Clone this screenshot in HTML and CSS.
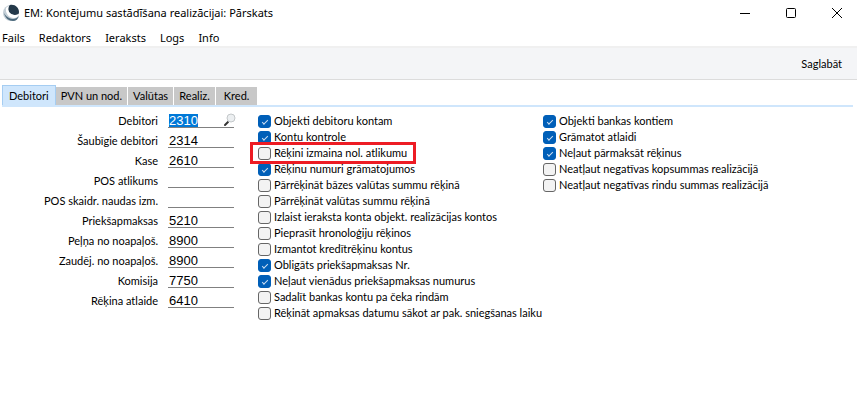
FILE: index.html
```html
<!DOCTYPE html>
<html lang="lv">
<head>
    <meta charset="UTF-8">
    <meta name="viewport" content="width=device-width, initial-scale=1.0">
    <title>EM: Kontējumu sastādīšana realizācijai: Pārskats</title>
    <link rel="stylesheet" href="styles.css">
</head>
<body>

    <!-- Title bar -->
    <header class="titlebar">
        <svg class="app-icon" viewBox="0 0 18 18" aria-hidden="true">
            <circle cx="9" cy="9" r="8" fill="#c3ced6"/>
            <path d="M8 1c5-1 9 3 9 7 0 3-2 4-5 3-4-1-6-4-6-6 0-2 1-3 2-4z" fill="#24394a"/>
            <path d="M2 9c1 5 5 8 9 8 3 0 5-2 6-5-3 3-6 4-10 2-2-1-4-3-5-5z" fill="#4c697c"/>
            <path d="M4 4c-1 5 3 10 8 10 2 0 4-1 5-4 0-1-2 1-4 1-5 0-8-4-6-9-1 0-2 1-3 2z" fill="#ffffff"/>
        </svg>
        <h1 class="window-title">EM: Kontējumu sastādīšana realizācijai: Pārskats</h1>
        <div class="window-buttons">
            <button type="button" aria-label="Minimizēt"><svg viewBox="0 0 12 12"><path d="M1 6.500h10"/></svg></button>
            <button type="button" aria-label="Maksimizēt"><svg viewBox="0 0 12 12"><rect x="1.500" y="1.500" width="9" height="9" rx="1"/></svg></button>
            <button type="button" aria-label="Aizvērt"><svg viewBox="0 0 12 12"><path d="M1 1l10 10M11 1L1 11"/></svg></button>
        </div>
    </header>

    <nav class="menu">
        <a href="#">Fails</a>
        <a href="#">Redaktors</a>
        <a href="#">Ieraksts</a>
        <a href="#">Logs</a>
        <a href="#">Info</a>
    </nav>

    <div class="toolbar">
        <button type="button" class="save-btn">Saglabāt</button>
    </div>

    <div class="tabs">
        <button type="button" class="tab active">Debitori</button>
        <button type="button" class="tab">PVN un nod.</button>
        <button type="button" class="tab">Valūtas</button>
        <button type="button" class="tab">Realiz.</button>
        <button type="button" class="tab">Kred.</button>
    </div>

    <form class="panel">
        <!-- Accounts -->
        <div class="accounts">
            <div class="field">
                <label for="debitori">Debitori</label>
                <div class="lookup">
                    <input type="text" id="debitori" value="2310" autofocus>
                    <svg class="search-icon" viewBox="0 0 14 14" aria-hidden="true">
                        <path d="M2 12l3-3" stroke="#333" stroke-width="2" stroke-linecap="round"/>
                        <circle cx="8" cy="5" r="4" fill="#eceff1" stroke="#c4c8ca"/>
                    </svg>
                </div>
            </div>
            <div class="field"><label for="saubigie">Šaubīgie debitori</label><input type="text" id="saubigie" value="2314"></div>
            <div class="field"><label for="kase">Kase</label><input type="text" id="kase" value="2610"></div>
            <div class="field"><label for="pos-atlikums">POS atlikums</label><input type="text" id="pos-atlikums"></div>
            <div class="field"><label for="pos-skaidra">POS skaidr. naudas izm.</label><input type="text" id="pos-skaidra"></div>
            <div class="field"><label for="prieksapmaksas">Priekšapmaksas</label><input type="text" id="prieksapmaksas" value="5210"></div>
            <div class="field"><label for="pelna">Peļņa no noapaļoš.</label><input type="text" id="pelna" value="8900"></div>
            <div class="field"><label for="zaudejumi">Zaudēj. no noapaļoš.</label><input type="text" id="zaudejumi" value="8900"></div>
            <div class="field"><label for="komisija">Komisija</label><input type="text" id="komisija" value="7750"></div>
            <div class="field"><label for="atlaide">Rēķina atlaide</label><input type="text" id="atlaide" value="6410"></div>
        </div>

        <!-- Options -->
        <div class="options">
            <label class="option"><input type="checkbox" checked>Objekti debitoru kontam</label>
            <label class="option"><input type="checkbox" checked>Kontu kontrole</label>
            <label class="option marked"><input type="checkbox">Rēķini izmaina nol. atlikumu</label>
            <label class="option"><input type="checkbox" checked>Rēķinu numuri grāmatojumos</label>
            <label class="option"><input type="checkbox">Pārrēķināt bāzes valūtas summu rēķinā</label>
            <label class="option"><input type="checkbox">Pārrēķināt valūtas summu rēķinā</label>
            <label class="option"><input type="checkbox">Izlaist ieraksta konta objekt. realizācijas kontos</label>
            <label class="option"><input type="checkbox">Pieprasīt hronoloģiju rēķinos</label>
            <label class="option"><input type="checkbox">Izmantot kredītrēķinu kontus</label>
            <label class="option"><input type="checkbox" checked>Obligāts priekšapmaksas Nr.</label>
            <label class="option"><input type="checkbox" checked>Neļaut vienādus priekšapmaksas numurus</label>
            <label class="option"><input type="checkbox">Sadalīt bankas kontu pa čeka rindām</label>
            <label class="option"><input type="checkbox">Rēķināt apmaksas datumu sākot ar pak. sniegšanas laiku</label>
        </div>

        <div class="options">
            <label class="option"><input type="checkbox" checked>Objekti bankas kontiem</label>
            <label class="option"><input type="checkbox" checked>Grāmatot atlaidi</label>
            <label class="option"><input type="checkbox" checked>Neļaut pārmaksāt rēķinus</label>
            <label class="option"><input type="checkbox">Neatļaut negatīvas kopsummas realizācijā</label>
            <label class="option"><input type="checkbox">Neatļaut negatīvas rindu summas realizācijā</label>
        </div>
    </form>

    <script>
        // Select the first account when the window opens
        document.getElementById("debitori").select();
    </script>

</body>
</html>
```
FILE: styles.css
```css
* {
    box-sizing: border-box;
}

body {
    margin: 0;
    background-color: #fff;
    color: #000;
    font-family: Lato, sans-serif;
    font-size: 11px;
    line-height: 16px;
}

button {
    border: none;
    background: none;
    padding: 0;
    color: inherit;
    font: inherit;
}

/* Title bar */
.titlebar {
    display: flex;
    align-items: center;
    height: 26px;
    padding-left: 2px;
}

.app-icon {
    width: 18px;
    height: 18px;
}

.window-title {
    flex: 1;
    margin: 0 0 0 4px;
    font-family: "Noto Sans", sans-serif;
    font-size: 11px;
    font-weight: 400;
}

.window-buttons {
    display: flex;
    margin-right: -3px;
}

.window-buttons button {
    display: flex;
    align-items: center;
    justify-content: center;
    width: 46px;
    height: 26px;
}

.window-buttons svg {
    width: 12px;
    height: 12px;
    fill: none;
    stroke: #000;
}

.menu {
    display: flex;
    gap: 14px;
    height: 20px;
    padding: 4px 2px 0;
    font-family: "Noto Sans", sans-serif;
}

.menu a {
    color: inherit;
    text-decoration: none;
}

.toolbar {
    display: flex;
    justify-content: flex-end;
    height: 34px;
    padding-right: 15px;
    background-color: #f4f5f7;
    border-top: 2px solid #f0f0f0;
    border-bottom: 1px solid #dcdcdc;
}

/* Tabs */
.tabs {
    display: flex;
    align-items: flex-end;
    gap: 1px;
    margin: 5px 4px 0 2px;
    border-bottom: 2px solid #cfe6fc;
}

.tab {
    min-width: 41px;
    height: 18px;
    padding: 0 5px;
    background-color: #c8c8c8;
}

.tab.active {
    height: 20px;
    padding: 0 6px;
    margin-right: -1px;
    background-color: #cfe6fc;
    border: 1px solid #a5cdf2;
    border-bottom: none;
}

/* Form */
.panel {
    display: flex;
    align-items: flex-start;
    padding-top: 4px;
}

.accounts {
    width: 234px;
}

.field {
    display: flex;
    align-items: center;
    justify-content: flex-end;
    gap: 10px;
    height: 20px;
}

.field input {
    width: 66px;
    height: 14px;
    padding: 0 1px;
    border: none;
    border-bottom: 1px solid #808080;
    outline: none;
    background: none;
    font-family: "Liberation Sans", Arial, sans-serif;
    font-size: 13px;
}

.field input::selection {
    background-color: #0078d7;
    color: #fff;
}

.lookup {
    display: flex;
    position: relative;
}

.search-icon {
    position: absolute;
    right: -3px;
    top: -1px;
    width: 14px;
    height: 14px;
}

.options {
    width: 285px;
    padding: 2px 0 0 24px;
}

.option {
    display: flex;
    align-items: center;
    gap: 3px;
    height: 16px;
    white-space: nowrap;
}

.option input {
    appearance: none;
    flex: none;
    width: 13px;
    height: 13px;
    margin: 0;
    border: 1px solid #666;
    border-radius: 3px;
    background-color: #f3f3f3;
}

.option input:checked {
    display: grid;
    place-items: center;
    border-color: #005fb8;
    background-color: #005fb8;
}

.option input:checked::before {
    content: "";
    width: 5px;
    height: 2px;
    border: solid #cfe0f2;
    border-width: 0 0 1px 1px;
    transform: rotate(-45deg);
}

/* Red frame around the option */
.marked {
    position: relative;
}

.marked::after {
    content: "";
    position: absolute;
    top: -3px;
    left: -8px;
    width: 160px;
    height: 16px;
    border: 3px solid #ed1c24;
}
```
